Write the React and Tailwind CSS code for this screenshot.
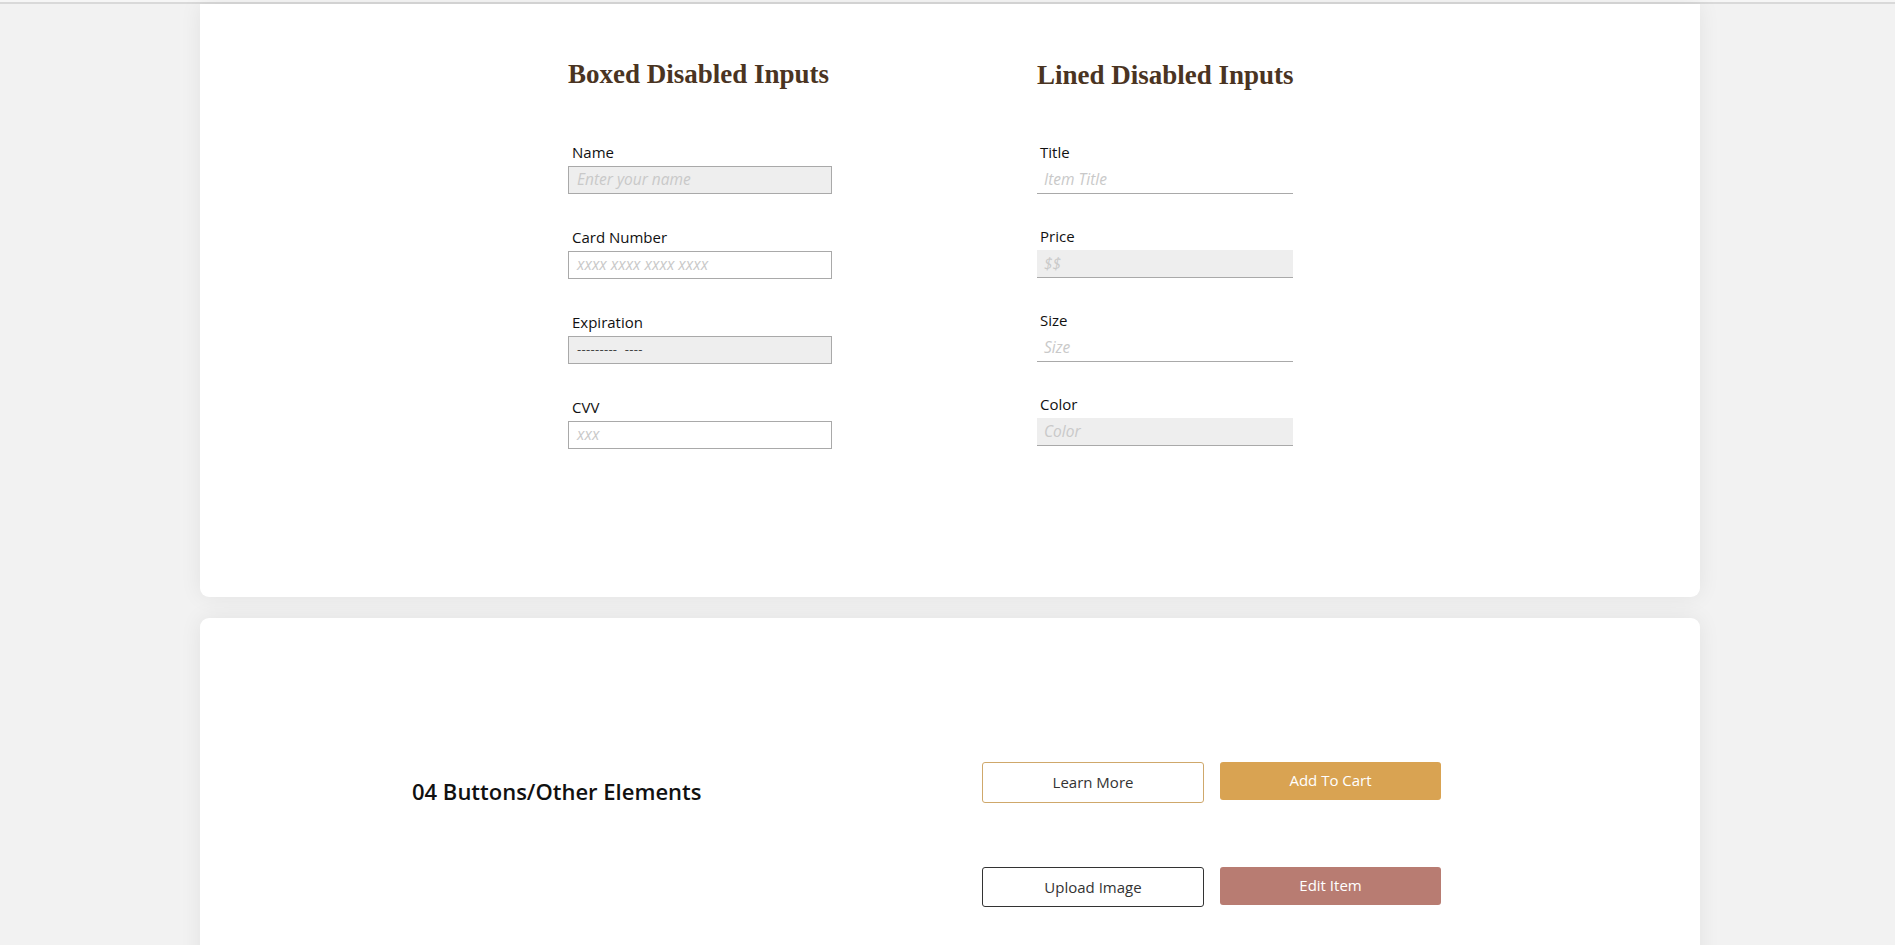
import React from "react";

const serif = { fontFamily: '"Liberation Serif", "DejaVu Serif", serif' };

function BoxedField({ label, placeholder, disabled, dashed }) {
  return (
    <div className="flex flex-col">
      <div className="pl-[4px] text-[15px] leading-[18px] text-[#111] mb-[5px]">{label}</div>
      <div
        className={`h-[28px] border border-[#a9a9a9] flex items-center pl-[8px] text-[15.5px] ${
          disabled ? "bg-[#eeeeee]" : "bg-white"
        }`}
      >
        {dashed ? (
          <span className="text-[#444] text-[13px] tracking-[0.3px]">---------&nbsp;&nbsp;----</span>
        ) : (
          <span className="italic text-[#c9c9c9]">{placeholder}</span>
        )}
      </div>
    </div>
  );
}

function LinedField({ label, placeholder, disabled }) {
  return (
    <div className="flex flex-col">
      <div className="pl-[3px] text-[15px] leading-[18px] text-[#111] mb-[5px]">{label}</div>
      <div
        className={`h-[28px] border-b-[1.5px] border-[#a9a9a9] flex items-center pl-[7px] text-[15.5px] ${
          disabled ? "bg-[#eeeeee]" : "bg-white"
        }`}
      >
        <span className="italic text-[#c9c9c9]">{placeholder}</span>
      </div>
    </div>
  );
}

export default function App() {
  return (
    <div
      className="h-[945px] overflow-hidden bg-[#f2f2f2]"
      style={{ fontFamily: '"Open Sans", Lato, "Liberation Sans", sans-serif' }}
    >
      <div className="h-[2px] bg-[#f6f6f6]" />
      <div className="h-[2px] bg-[#d9d9d9]" />

      {/* Card 1 */}
      <div className="ml-[200px] w-[1500px] h-[593px] bg-white rounded-b-[9px] shadow-[0_0_22px_rgba(0,0,0,0.07)]">
        <div className="flex pl-[368px] pt-[53px] gap-[205px]">
          <div className="w-[264px] flex flex-col">
            <h2 className="text-[27px] leading-[34px] font-bold text-[#4a3422] whitespace-nowrap" style={serif}>
              Boxed Disabled Inputs
            </h2>
            <div className="mt-[52px] flex flex-col gap-[34px]">
              <BoxedField label="Name" placeholder="Enter your name" disabled />
              <BoxedField label="Card Number" placeholder="xxxx xxxx xxxx xxxx" />
              <BoxedField label="Expiration" disabled dashed />
              <BoxedField label="CVV" placeholder="xxx" />
            </div>
          </div>
          <div className="w-[256px] flex flex-col">
            <h2 className="text-[27px] leading-[34px] font-bold text-[#4a3422] whitespace-nowrap mt-[1px]" style={serif}>
              Lined Disabled Inputs
            </h2>
            <div className="mt-[51px] flex flex-col gap-[33px]">
              <LinedField label="Title" placeholder="Item Title" />
              <LinedField label="Price" placeholder="$$" disabled />
              <LinedField label="Size" placeholder="Size" />
              <LinedField label="Color" placeholder="Color" disabled />
            </div>
          </div>
        </div>
      </div>

      {/* Card 2 */}
      <div className="ml-[200px] mt-[21px] w-[1500px] h-[400px] bg-white rounded-t-[9px] shadow-[0_0_22px_rgba(0,0,0,0.07)]">
        <div className="flex pt-[144px]">
          <div className="w-[782px] pl-[212px] pt-[15px]">
            <h3 className="text-[22px] leading-[28px] font-semibold text-[#111] whitespace-nowrap">
              04 Buttons/Other Elements
            </h3>
          </div>
          <div className="grid grid-cols-[222px_221px] gap-x-[16px] gap-y-[64px] items-start">
            <button className="h-[41px] border border-[#cfa86b] rounded-[3px] bg-white text-[15px] text-[#333]">
              Learn More
            </button>
            <button className="h-[38px] pb-[2px] rounded-[3px] bg-[#d9a352] text-[15px] text-white">
              Add To Cart
            </button>
            <button className="h-[40px] border border-[#333] rounded-[3px] bg-white text-[15px] text-[#333]">
              Upload Image
            </button>
            <button className="h-[38px] pb-[2px] rounded-[3px] bg-[#b87c72] text-[15px] text-white">
              Edit Item
            </button>
          </div>
        </div>
      </div>
    </div>
  );
}
